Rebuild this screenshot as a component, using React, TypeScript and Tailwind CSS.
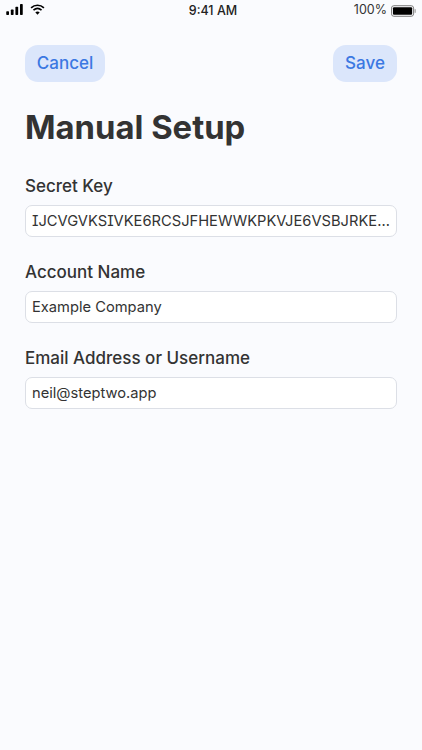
export default function App() {
  const fields = [
    { label: "Secret Key", value: "IJCVGVKSIVKE6RCSJFHEWWKPKVJE6VSBJRKE6VSBJRKE", cls: "[font-feature-settings:'ss02']" },
    { label: "Account Name", value: "Example Company", cls: "" },
    { label: "Email Address or Username", value: "neil@steptwo.app", cls: "" },
  ];
  return (
    <div className="w-[422px] h-[750px] bg-[#fafbfe] text-[#333333] overflow-hidden font-['Inter',sans-serif]">
      <div className="h-[22px] grid grid-cols-3 items-center pl-[6px] pr-[6px]">
        <div className="flex items-center gap-[7px] pb-[3px]">
          <svg width="17" height="11" viewBox="0 0 18 12" fill="#000">
            <rect x="0" y="8" width="3" height="4" rx="0.7" />
            <rect x="5" y="6" width="3" height="6" rx="0.7" />
            <rect x="10" y="3" width="3" height="9" rx="0.7" />
            <rect x="15" y="0" width="3" height="12" rx="0.7" />
          </svg>
          <svg width="15" height="11" viewBox="0 0 16 12">
            <path d="M1 4.2 C5 0.4 11 0.4 15 4.2" fill="none" stroke="#000" strokeWidth="1.8" />
            <path d="M3.6 6.6 C6.2 4.3 9.8 4.3 12.4 6.6" fill="none" stroke="#000" strokeWidth="1.8" />
            <path d="M8 11.6 L5.6 8.9 C7 7.8 9 7.8 10.4 8.9 Z" fill="#000" />
          </svg>
        </div>
        <div className="text-center text-[12.5px] font-medium leading-none text-[#222] pl-[4px]">9:41 AM</div>
        <div className="flex items-center justify-end gap-[4px] pb-[1px]">
          <span className="text-[12.5px] leading-none text-[#333]">100%</span>
          <svg width="25" height="12" viewBox="0 0 26 12">
            <rect x="0.5" y="0.5" width="23" height="11" rx="2.5" fill="none" stroke="#777" />
            <rect x="2" y="2" width="20" height="8" rx="1.2" fill="#000" />
            <rect x="24.5" y="4" width="1.2" height="4" rx="0.6" fill="#999" />
          </svg>
        </div>
      </div>
      <div className="px-[25px]">
        <div className="flex justify-between mt-[23px]">
          <button className="h-[37px] w-[80px] rounded-[13px] bg-[#dbe6fb] text-[#3b78e2] text-[17px] font-medium">Cancel</button>
          <button className="h-[37px] w-[64px] rounded-[13px] bg-[#dbe6fb] text-[#3b78e2] text-[17px] font-medium">Save</button>
        </div>
        <h1 className="mt-[22px] text-[32.8px] leading-[46px] font-bold text-[#333]">Manual Setup</h1>
        <div className="mt-[24px] flex flex-col gap-[23px]">
          {fields.map((f) => (
            <div key={f.label}>
              <div className="text-[17px] leading-[24px] font-medium text-[#333]">{f.label}</div>
              <div className="mt-[7px] h-[32px] pl-[6px] pr-[6px] flex items-center rounded-[7px] border border-[#dcdfe6] bg-white text-[14.7px]">
                <span className={`truncate text-[#333] ${f.cls}`}>{f.value}</span>
              </div>
            </div>
          ))}
        </div>
      </div>
    </div>
  );
}
